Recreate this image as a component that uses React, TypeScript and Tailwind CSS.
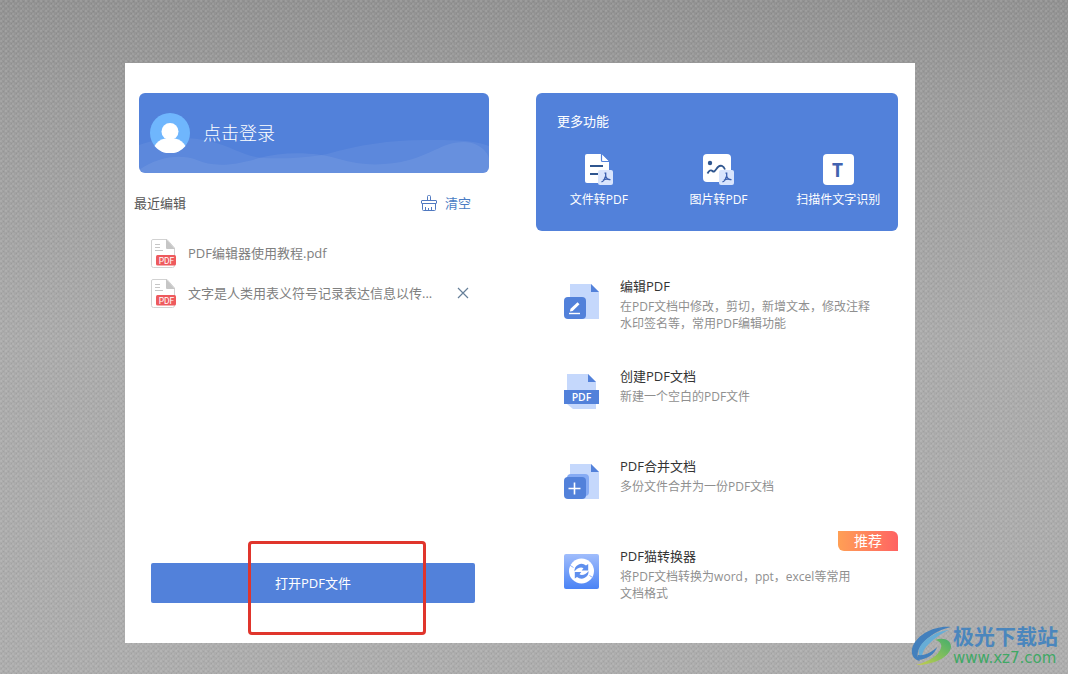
import type { ReactNode } from 'react';

interface RecentFile {
  name: string;
  removable?: boolean;
}

interface Feature {
  title: string;
  lines: string[];
  icon: ReactNode;
  badge?: string;
}

function Backdrop() {
  return (
    <svg className="absolute inset-0 h-full w-full" aria-hidden="true">
      <defs>
        <linearGradient id="shade" x1="0" y1="0" x2="0" y2="1">
          <stop offset="0" stopColor="#8f8f8f" />
          <stop offset="0.15" stopColor="#9a9a9a" />
          <stop offset="0.5" stopColor="#a9a9a9" />
          <stop offset="1" stopColor="#ababab" />
        </linearGradient>
        <pattern id="weave" width="5" height="5" patternUnits="userSpaceOnUse">
          <rect width="2" height="2" fill="#fff" fillOpacity="0.1" />
          <rect x="2" y="3" width="2" height="2" fill="#fff" fillOpacity="0.08" />
          <rect x="3" y="1" width="1" height="1" fill="#000" fillOpacity="0.06" />
          <rect x="1" y="3" width="1" height="1" fill="#000" fillOpacity="0.06" />
        </pattern>
        <filter id="grain" x="0" y="0" width="100%" height="100%">
          <feTurbulence type="fractalNoise" baseFrequency="0.6" numOctaves="2" seed="4" />
          <feColorMatrix type="saturate" values="0" />
        </filter>
      </defs>
      <rect width="100%" height="100%" fill="url(#shade)" />
      <rect width="100%" height="100%" fill="url(#weave)" />
      <rect width="100%" height="100%" filter="url(#grain)" opacity="0.12" />
    </svg>
  );
}

function Waves() {
  return (
    <svg
      className="absolute inset-0 h-full w-full"
      viewBox="0 0 350 80"
      preserveAspectRatio="none"
      aria-hidden="true"
    >
      <path
        d="M0 52C20 44 50 43 70 48C95 54 105 64 125 65C155 66 170 64 188 61C220 52 250 47 285 47C315 47 335 47 350 53V80H0Z"
        fill="#fff"
        fillOpacity="0.06"
      />
      <path
        d="M0 77C20 63 42 61 58 67C72 73 90 74 120 65C145 58 178 59 200 66C222 73 248 73 270 67C295 60 305 49 325 49C340 49 350 60 350 66V80H0Z"
        fill="#fff"
        fillOpacity="0.07"
      />
    </svg>
  );
}

function Avatar() {
  return (
    <svg className="relative h-10 w-10 shrink-0" viewBox="0 0 40 40" aria-hidden="true">
      <circle cx="20" cy="20" r="20" fill="#6fb6fd" />
      <circle cx="20" cy="18.500" r="8.500" fill="#fff" />
      <path d="M15 25.500h10c5 1 8.500 4 10.500 7.500a20 20 0 0 1-31 0c2-3.500 5.500-6.500 10.500-7.500Z" fill="#fff" />
    </svg>
  );
}

function BrushIcon() {
  return (
    <svg className="h-4 w-4" viewBox="0 0 16 16" fill="none" stroke="#5079c0" aria-hidden="true">
      <path d="M6.500 5.500V1.500a1 1 0 0 1 1-1h1a1 1 0 0 1 1 1V5.500" />
      <rect x="0.500" y="5.500" width="15" height="3" rx="0.500" />
      <path d="M1.500 8.500V14.500a1 1 0 0 0 1 1h11a1 1 0 0 0 1-1V8.500M4.500 15.500V12M7.500 15.500V13M10.500 15.500V12" />
    </svg>
  );
}

function PdfFileIcon() {
  return (
    <svg className="h-[30px] w-[26px] shrink-0" viewBox="0 -1 26 30" aria-hidden="true">
      <path d="M2 0.500H16L23.500 9V26.500a2 2 0 0 1-2 2H2.500a2 2 0 0 1-2-2V2a1.500 1.500 0 0 1 1.500-1.500Z" fill="#fff" stroke="#d2d2d2" />
      <path d="M15 0L24 10H16a1 1 0 0 1-1-1Z" fill="#c6c6c6" />
      <path d="M4 5.500h5M4 8.500h5M4 11.500h8" stroke="#c6c6c6" />
      <rect x="5" y="16" width="20" height="10.500" rx="1.500" fill="#ee5a5d" />
      <text x="15.500" y="24.500" textAnchor="middle" fontSize="8.500" fontFamily="Roboto, sans-serif" fill="#fff">
        PDF
      </text>
    </svg>
  );
}

function CloseIcon() {
  return (
    <svg className="h-3 w-3" viewBox="0 0 12 12" stroke="#667f99" strokeWidth="1.200" aria-hidden="true">
      <path d="M1 1l10 10M11 1L1 11" />
    </svg>
  );
}

function AcrobatMark() {
  return (
    <g transform="translate(13 16)">
      <rect width="15" height="15" rx="2" fill="#d9e5fd" />
      <path d="M6.500 3.200h1.200v3c.5 2 1.800 3.300 4.800 3.500M7.300 6.500C7 9 5.600 11 3.500 12M5 10.200c1.500-1 4-1.300 6.500-.7" fill="none" stroke="#3a5fae" strokeWidth="1.300" />
    </g>
  );
}

function DocToPdfIcon() {
  return (
    <svg className="h-8 w-8" viewBox="-2 0 32 32" aria-hidden="true">
      <path d="M2 0H16L24 8V27a2 2 0 0 1-2 2H2a2 2 0 0 1-2-2V2a2 2 0 0 1 2-2Z" fill="#fff" />
      <path d="M16.500 0V6.500a1 1 0 0 0 1 1H24" fill="#fff" stroke="#5281da" strokeWidth="1.200" />
      <path d="M5 12h13M5 20h8" stroke="#2f568f" strokeWidth="2" />
      <AcrobatMark />
    </svg>
  );
}

function ImageToPdfIcon() {
  return (
    <svg className="h-8 w-8" viewBox="-4 0 32 32" aria-hidden="true">
      <rect x="-3" width="28" height="28" rx="4" fill="#fff" />
      <circle cx="4" cy="9" r="2.200" fill="#2f568f" />
      <path d="M1.500 19.500c1.500-3 3.500-4 5-2.500 2 2 3.500-2 5.500-4 2.500-2.200 5.500-1.500 7 2.500" fill="none" stroke="#2f568f" strokeWidth="1.800" />
      <AcrobatMark />
    </svg>
  );
}

function OcrIcon() {
  return (
    <svg className="h-8 w-8" viewBox="0 0 32 32" aria-hidden="true">
      <rect x="1" width="31" height="31" rx="4" fill="#fff" />
      <text x="15.500" y="23" textAnchor="middle" fontSize="19" fontWeight="700" fontFamily="Open Sans, sans-serif" fill="#4263b0">
        T
      </text>
    </svg>
  );
}

function EditIcon() {
  return (
    <svg className="h-9 w-9" viewBox="0 0 36 36" aria-hidden="true">
      <path d="M6 0H27L35 8V35H6Z" fill="#c5d8fc" />
      <path d="M27 0L35 8H27Z" fill="#5281da" />
      <rect y="13" width="22" height="22" rx="4" fill="#5281da" />
      <path d="M5 29.500h11" stroke="#fff" strokeWidth="1.400" />
      <path d="M6 27.500l.5-2.800L13.500 18.300l2 2L8.700 27Z" fill="#fff" />
    </svg>
  );
}

function CreateIcon() {
  return (
    <svg className="h-9 w-9" viewBox="0 0 36 36" aria-hidden="true">
      <path d="M3 0H24L32 8V35H9L3 30Z" fill="#c5d8fc" />
      <path d="M24 0L32 8H24Z" fill="#5281da" />
      <rect y="16" width="35" height="14" fill="#5281da" />
      <text x="17.500" y="26.500" textAnchor="middle" fontSize="10.500" fontWeight="600" fontFamily="Open Sans, sans-serif" fill="#fff">
        PDF
      </text>
    </svg>
  );
}

function MergeIcon() {
  return (
    <svg className="h-9 w-9" viewBox="0 0 36 36" aria-hidden="true">
      <path d="M6 0H27L35 8V35H6Z" fill="#c5d8fc" />
      <path d="M27 0L35 8H27Z" fill="#5281da" />
      <rect x="3" y="10" width="22" height="22" rx="4" fill="#86abf4" />
      <rect y="13" width="22" height="22" rx="4" fill="#5281da" />
      <path d="M4.500 24.500h12M10.500 18.500v12" stroke="#fff" strokeWidth="1.600" />
    </svg>
  );
}

function ConvertIcon() {
  return (
    <svg className="h-9 w-9" viewBox="0 0 36 36" aria-hidden="true">
      <defs>
        <linearGradient id="convert" x1="0" y1="0" x2="0" y2="1">
          <stop offset="0" stopColor="#a0bdfc" />
          <stop offset="1" stopColor="#4a83f5" />
        </linearGradient>
      </defs>
      <rect width="35" height="35" rx="2" fill="url(#convert)" />
      <circle cx="17.500" cy="17" r="12.500" fill="#fff" />
      <path d="M10.500 17.500a7 7 0 0 1 11.500-6l2.200-1.500v6.500h-6.500l1.800-2.300c-2.500-1.500-6.500-.2-9 3.300Z" fill="#5f8fee" />
      <path d="M24.500 17a7 7 0 0 1-11.500 6l-2.200 1.500v-6.500h6.500l-1.800 2.300c2.500 1.500 6.500.2 9-3.300Z" fill="#5f8fee" />
      <path d="M5.500 11l4 2.500M25.500 21.500l4 2.500" stroke="#8aaefa" />
    </svg>
  );
}

function SiteLogo() {
  return (
    <svg className="h-10 w-[42px] shrink-0" viewBox="0 0 42 40" aria-hidden="true">
      <defs>
        <linearGradient id="leaf" x1="0" y1="1" x2="1" y2="0">
          <stop offset="0" stopColor="#c6cf4c" />
          <stop offset="1" stopColor="#45ae6c" />
        </linearGradient>
      </defs>
      <path d="M40 1C24-1 4 9 1 23C0 29 3 34 9 35C5 30 6 24 12 17C18 10 27 4 40 1Z" fill="#4380bd" />
      <path d="M38 4C26 5 12 13 8 23C7 27 8 30 11 32C11 27 13 22 19 17C23 13 29 8 38 4Z" fill="#67add6" />
      <path d="M24 14C33 11 40 14 40 21C39 31 23 39 5 39C17 36 28 29 30 22C31 18 29 15 24 14Z" fill="url(#leaf)" />
      <path d="M7 34C17 33 24 28 26 21C21 26 14 30 7 29Z" fill="#4380bd" />
    </svg>
  );
}

const recentFiles: RecentFile[] = [
  { name: 'PDF编辑器使用教程.pdf' },
  { name: '文字是人类用表义符号记录表达信息以传...', removable: true },
];

const tools = [
  { label: '文件转PDF', icon: <DocToPdfIcon /> },
  { label: '图片转PDF', icon: <ImageToPdfIcon /> },
  { label: '扫描件文字识别', icon: <OcrIcon /> },
];

const features: Feature[] = [
  {
    title: '编辑PDF',
    lines: ['在PDF文档中修改，剪切，新增文本，修改注释', '水印签名等，常用PDF编辑功能'],
    icon: <EditIcon />,
  },
  { title: '创建PDF文档', lines: ['新建一个空白的PDF文件'], icon: <CreateIcon /> },
  { title: 'PDF合并文档', lines: ['多份文件合并为一份PDF文档'], icon: <MergeIcon /> },
  {
    title: 'PDF猫转换器',
    lines: ['将PDF文档转换为word，ppt，excel等常用', '文档格式'],
    icon: <ConvertIcon />,
    badge: '推荐',
  },
];

export default function App() {
  return (
    <div className="relative flex min-h-screen pt-[63px] pr-[153px] pb-[31px] pl-[125px] font-['Open_Sans','Noto_Sans_CJK_SC',sans-serif] text-[13px] leading-5">
      <Backdrop />

      <main className="relative grid flex-1 grid-cols-[350fr_362fr] gap-x-[47px] bg-white pt-[30px] pr-[17px] pb-10 pl-[14px]">
        <section className="flex flex-col">
          <button className="relative flex h-20 items-center gap-[13px] overflow-hidden rounded-md bg-[#5281da] px-[11px] text-lg leading-6 font-light text-white">
            <Waves />
            <Avatar />
            <span className="relative">点击登录</span>
          </button>

          <div className="-ml-[5px] flex items-center justify-between pt-5 pr-[18px]">
            <h2 className="text-[#555]">最近编辑</h2>
            <button className="flex items-center gap-2 text-[#4a7cc4]">
              <BrushIcon />
              清空
            </button>
          </div>

          <ul className="pt-5 pr-5 pl-3">
            {recentFiles.map((file) => (
              <li key={file.name} className="flex h-10 items-center">
                <a href="#" className="flex flex-1 items-center gap-[11px] text-[#808080]">
                  <PdfFileIcon />
                  {file.name}
                </a>
                {file.removable && (
                  <button aria-label="删除">
                    <CloseIcon />
                  </button>
                )}
              </li>
            ))}
          </ul>

          <div className="relative mt-auto mr-[14px] ml-3">
            <button className="h-10 w-full rounded-xs bg-[#5281da] text-white">打开PDF文件</button>
            <div className="pointer-events-none absolute -top-[22px] -bottom-8 left-[30%] w-[55%] rounded border-[3px] border-[#e0352c]" />
          </div>
        </section>

        <section className="flex flex-col">
          <div className="rounded-md bg-[#5281da] pt-[18px] pb-[21px] text-white">
            <h2 className="px-[21px]">更多功能</h2>
            <div className="grid grid-cols-3 pt-[23px] pl-[3px]">
              {tools.map((tool) => (
                <button key={tool.label} className="flex flex-col items-center gap-1 text-xs leading-5">
                  {tool.icon}
                  <span>{tool.label}</span>
                </button>
              ))}
            </div>
          </div>

          <ul className="pt-[45px] pl-7">
            {features.map((feature) => (
              <li key={feature.title} className="relative h-[90px] last:h-auto">
                <a href="#" className="flex gap-5">
                  <span className="shrink-0 pt-2">{feature.icon}</span>
                  <span className="block">
                    <span className="block text-[#333]">{feature.title}</span>
                    <span className="block pt-0.5 text-xs leading-[17px] text-[#8f8f8f]">
                      {feature.lines.map((line) => (
                        <span key={line} className="block whitespace-nowrap">
                          {line}
                        </span>
                      ))}
                    </span>
                  </span>
                </a>
                {feature.badge && (
                  <span className="absolute -top-[15px] right-0 rounded-tr-md rounded-bl-md bg-linear-to-r from-[#ff9f55] to-[#ff6262] px-4 text-sm leading-5 text-white">
                    {feature.badge}
                  </span>
                )}
              </li>
            ))}
          </ul>
        </section>
      </main>

      <div className="absolute right-2.5 bottom-1.5 flex items-center">
        <SiteLogo />
        <div>
          <p className="text-[21px] leading-6 font-bold text-[#4a86bd]">极光下载站</p>
          <p className="font-['DejaVu_Sans',sans-serif] text-[15px] leading-5 text-[#3fa865]">www.xz7.com</p>
        </div>
      </div>
    </div>
  );
}
